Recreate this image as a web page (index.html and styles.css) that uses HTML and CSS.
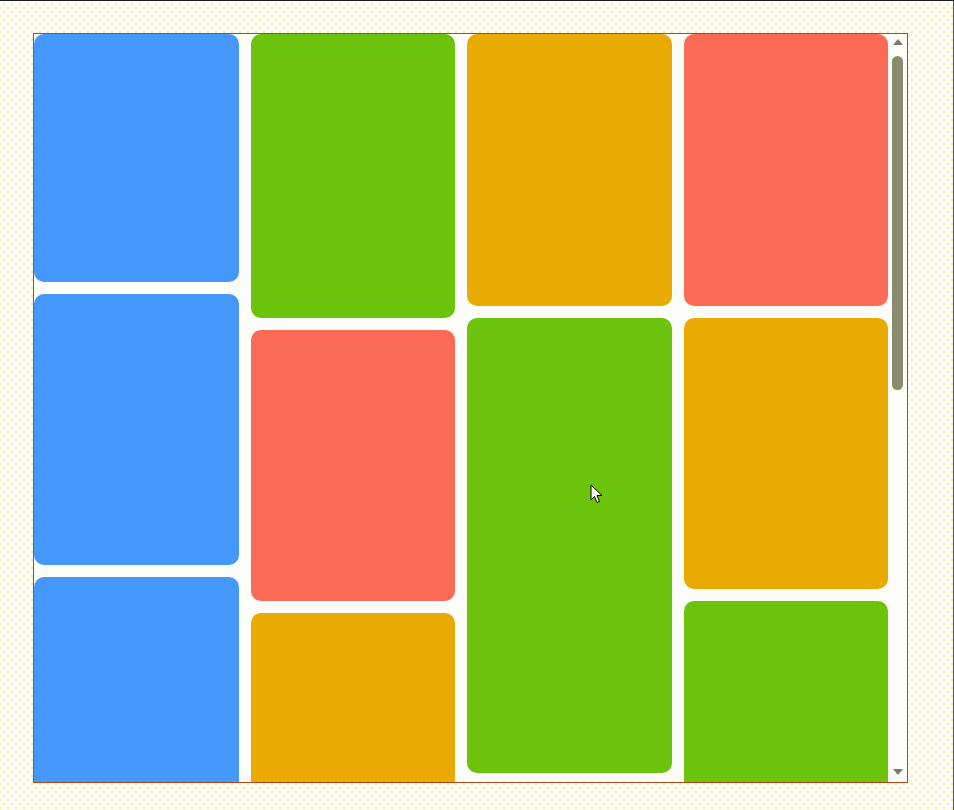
FILE: index.html
```html
<!DOCTYPE html>
<html>
<head>
<meta charset="utf-8">
<link rel="stylesheet" href="styles.css">
</head>
<body>
<div class="frame">
  <div class="board">
    <div class="viewport">
      <div class="grid">
        <div class="col">
          <div class="card blue" style="height:248px"></div>
          <div class="card blue" style="height:271px"></div>
          <div class="card blue" style="height:271px"></div>
          <div class="card green" style="height:284px"></div>
          <div class="card orange" style="height:248px"></div>
          <div class="card red" style="height:200px"></div>
        </div>
        <div class="col">
          <div class="card green" style="height:284px"></div>
          <div class="card red" style="height:271px"></div>
          <div class="card orange" style="height:271px"></div>
          <div class="card blue" style="height:248px"></div>
          <div class="card green" style="height:271px"></div>
          <div class="card orange" style="height:200px"></div>
        </div>
        <div class="col">
          <div class="card orange" style="height:272px"></div>
          <div class="card green" style="height:455px"></div>
          <div class="card red" style="height:271px"></div>
          <div class="card blue" style="height:284px"></div>
          <div class="card green" style="height:248px"></div>
        </div>
        <div class="col">
          <div class="card red" style="height:272px"></div>
          <div class="card orange" style="height:271px"></div>
          <div class="card green" style="height:271px"></div>
          <div class="card blue" style="height:284px"></div>
          <div class="card red" style="height:248px"></div>
        </div>
      </div>
    </div>
    <div class="scrollbar">
      <div class="arrow up"></div>
      <div class="track"><div class="thumb"></div></div>
      <div class="arrow down"></div>
    </div>
  </div>
  <svg class="cursor" width="14" height="22" viewBox="0 0 14 22">
    <path d="M1 1 L1 16 L4.5 12.5 L7 18.5 L9.5 17.5 L7 11.5 L12 11.5 Z" fill="#fff" stroke="#000" stroke-width="1"/>
  </svg>
</div>
</body>
</html>
```
FILE: styles.css
```css
html, body {
  margin: 0;
  padding: 0;
  width: 954px;
  height: 810px;
  overflow: hidden;
}
body {
  background-color: #fdfdff;
  background-image:
    radial-gradient(circle, #f3ee7e 0.75px, transparent 1px),
    radial-gradient(circle, #f3ee7e 0.75px, transparent 1px);
  background-size: 8px 8px, 8px 8px;
  background-position: 0 0, 4px 4px;
}
.frame {
  position: relative;
  box-sizing: border-box;
  width: 954px;
  height: 810px;
  border-top: 1px solid #1a1a1a;
  border-right: 1px solid #555;
  padding: 32px 0 0 33px;
}
.board {
  box-sizing: border-box;
  width: 875px;
  height: 750px;
  border: 1px solid #b8451a;
  background-color: #fcfcf8;
  display: flex;
}
.viewport {
  flex: 1;
  overflow: hidden;
}
.grid {
  display: grid;
  grid-template-columns: repeat(4, 1fr);
  column-gap: 12px;
  align-items: start;
}
.col {
  display: flex;
  flex-direction: column;
  gap: 12px;
}
.card {
  border-radius: 10px;
}
.blue { background: #4598fb; }
.green { background: #6cc30b; }
.orange { background: #e9ab02; }
.red { background: #fb6a57; }

.scrollbar {
  width: 19px;
  display: flex;
  flex-direction: column;
  align-items: center;
}
.arrow {
  width: 0;
  height: 0;
  border-left: 5px solid transparent;
  border-right: 5px solid transparent;
}
.arrow.up {
  margin-top: 5px;
  border-bottom: 6px solid #7a7a6c;
}
.arrow.down {
  margin-bottom: 7px;
  border-top: 6px solid #7a7a6c;
}
.track {
  flex: 1;
  width: 100%;
  display: flex;
  justify-content: center;
  padding-top: 11px;
}
.thumb {
  width: 11px;
  height: 334px;
  border-radius: 6px;
  background: #8a8a6e;
}
.cursor {
  position: absolute;
  left: 590px;
  top: 483px;
}
```
